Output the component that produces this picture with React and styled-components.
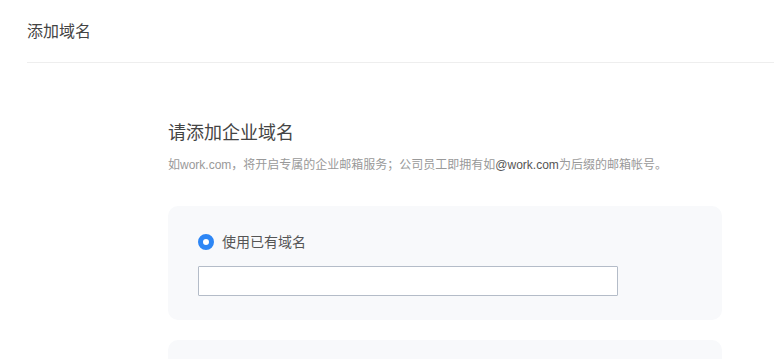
import styled, { createGlobalStyle } from 'styled-components';

const GlobalStyle = createGlobalStyle`
    html, body {
        margin: 0;
        padding: 0;
        background: #ffffff;
        font-family: "Liberation Sans", "Noto Sans CJK SC", sans-serif;
    }
`;

const Page = styled.div`
    width: 774px;
    height: 359px;
    overflow: hidden;
`;

const Header = styled.div`
    margin-left: 27px;
    height: 62px;
    border-bottom: 1px solid #eeeeee;
    display: flex;
    align-items: center;

    h1 {
        margin: 0;
        font-size: 16px;
        font-weight: 400;
        color: #444444;
        padding-bottom: 2px;
    }
`;

const Content = styled.div`
    margin: 58px 0 0 168px;
    width: 554px;
`;

const Title = styled.h2`
    margin: 0;
    font-size: 18px;
    line-height: 24px;
    font-weight: 400;
    color: #444444;
`;

const Desc = styled.p`
    margin: 11px 0 0;
    font-size: 12px;
    line-height: 18px;
    color: #999999;

    em {
        font-style: normal;
        color: #555555;
    }
`;

const Cards = styled.div`
    margin-top: 32px;
    display: flex;
    flex-direction: column;
    gap: 20px;
`;

const Card = styled.div`
    background: #f8f9fb;
    border-radius: 10px;
    padding: 26px 30px 24px;
    min-height: ${p => p.$minHeight || 0}px;
`;

const RadioRow = styled.label`
    display: flex;
    align-items: center;
    gap: 8px;
    font-size: 14px;
    line-height: 20px;
    color: #555555;
    cursor: pointer;
`;

const Radio = styled.span`
    width: 16px;
    height: 16px;
    border-radius: 50%;
    box-sizing: border-box;
    background: #ffffff;
    border: ${p => (p.$checked ? '5px solid #2d86f5' : '1px solid #c0c6cf')};
    flex-shrink: 0;
`;

const Input = styled.input`
    display: block;
    margin-top: 14px;
    width: 420px;
    height: 30px;
    box-sizing: border-box;
    border: 1px solid #b4bcc8;
    border-radius: 1px;
    background: #ffffff;
    padding: 0 8px;
    font-size: 14px;
    outline: none;
`;

export default function App() {
    return (
        <Page>
            <GlobalStyle />
            <Header>
                <h1>添加域名</h1>
            </Header>
            <Content>
                <Title>请添加企业域名</Title>
                <Desc>
                    如work.com，将开启专属的企业邮箱服务；公司员工即拥有如<em>@work.com</em>为后缀的邮箱帐号。
                </Desc>
                <Cards>
                    <Card>
                        <RadioRow>
                            <Radio $checked />
                            使用已有域名
                        </RadioRow>
                        <Input type="text" />
                    </Card>
                    <Card $minHeight={60} />
                </Cards>
            </Content>
        </Page>
    );
}
